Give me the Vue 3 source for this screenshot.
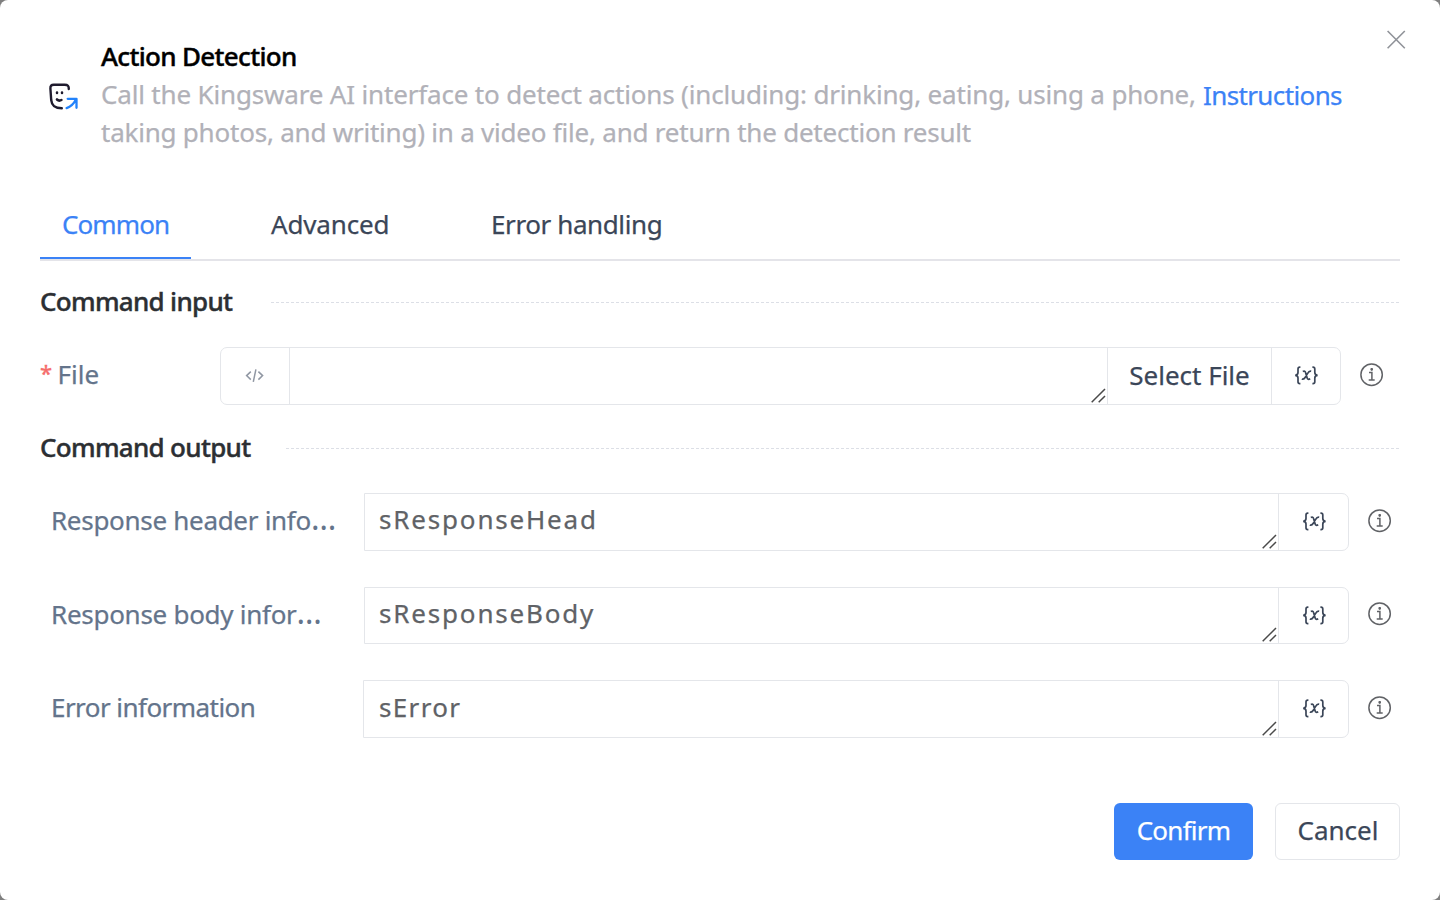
<script setup>
const tabs = [
  { name: 'Common', cls: 'tab-common' },
  { name: 'Advanced', cls: 'tab-advanced' },
  { name: 'Error handling', cls: 'tab-error' },
]
const outputs = [
  { label: 'Response header info', cut: true, value: 'sResponseHead', cls: 'out-head' },
  { label: 'Response body infor', cut: true, value: 'sResponseBody', cls: 'out-body' },
  { label: 'Error information', cut: false, value: 'sError', cls: 'out-error' },
]
</script>

<template>
  <div class="backdrop">
    <section class="dialog">
      <header class="header">
        <svg class="logo" width="30" height="28" viewBox="0 0 30 28" fill="none" stroke-linecap="round" stroke-linejoin="round">
          <path d="M19.8 6 C19.9 3 18.8 1.7 15.7 1.7 H4.8 C2.3 1.7 1.3 2.9 1.4 5.5 L2.2 17 C2.8 22.5 5.5 25.3 12.8 25.3" stroke="#1f1b2e" stroke-width="2.4" />
          <path d="M8 9.6 V9.9 M13 9.6 V9.9" stroke="#1f1b2e" stroke-width="2.5" />
          <path d="M8 16.5 Q10 18.4 12.4 17" stroke="#1f1b2e" stroke-width="2.6" />
          <path d="M18.7 15.8 H27.5 V24.8 M27 16.3 Q24 22.8 17.6 25.1" stroke="#2282fb" stroke-width="2.3" />
        </svg>
        <div class="intro">
          <h1>Action Detection</h1>
          <p class="line-a">Call the Kingsware AI interface to detect actions (including: drinking, eating, using a phone,</p>
          <p class="line-b">taking photos, and writing) in a video file, and return the detection result</p>
        </div>
        <a class="instructions">Instructions</a>
        <svg class="close" width="20" height="20" viewBox="0 0 20 20" fill="none" stroke="#909399" stroke-width="1.6">
          <path d="M1.6 1 L18.8 18.2 M18.8 1 L1.6 18.2" />
        </svg>
      </header>

      <nav class="tabs">
        <div v-for="(t, i) in tabs" :key="t.name" class="tab" :class="[t.cls, { active: i === 0 }]">{{ t.name }}</div>
      </nav>

      <div class="divider first">
        <h2>Command input</h2><svg class="dash" width="1131" height="1"><path d="M0 .5 H1131" stroke="#dcdfe6" stroke-dasharray="3 2" stroke-dashoffset="3" /></svg>
      </div>

      <div class="row file-row">
        <label class="file-label"><span class="star">*</span><span>File</span></label>
        <div class="group file-group">
          <div class="cell code">
            <svg width="20" height="14" viewBox="0 0 20 14" fill="none" stroke="#9097a3" stroke-width="1.5">
              <path d="M5.8 2.6 L1.6 6.6 L5.8 10.6 M13.4 2.6 L17.6 6.6 L13.4 10.6 M10.9 .4 L8.3 12.8" />
            </svg>
          </div>
          <div class="cell field">
            <svg class="grip" width="15" height="15" viewBox="0 0 15 15" stroke="#4a4a4a" stroke-width="1.5"><path d="M.7 14.3 L14 1 M7.7 14.3 L14 8" /></svg>
          </div>
          <div class="cell select">Select File</div>
          <div class="cell var">
            <svg width="24" height="20" viewBox="0 0 24 20" fill="none" stroke="#3b4658" stroke-width="1.7">
              <path d="M6.4 1.1 H5.8 Q4 1.1 4 3 V6.6 Q4 9.1 1.2 9.3 Q4 9.5 4 12 V15.8 Q4 17.7 5.8 17.7 H6.4" />
              <path d="M18.4 1.1 H19 Q20.8 1.1 20.8 3 V6.6 Q20.8 9.1 23.6 9.3 Q20.8 9.5 20.8 12 V15.8 Q20.8 17.7 19 17.7 H18.4" />
              <path d="M8.8 5.5 Q11 4.4 11.7 6.9 L13 11.6 Q13.7 14.3 16.2 12.8 M17.2 5.2 Q15.2 4.6 13.3 7.9 L11.3 11.3 Q9.8 13.9 7.8 13" />
            </svg>
          </div>
        </div>
        <svg class="info" width="24" height="24" viewBox="0 0 24 24" fill="none" stroke="#606266" stroke-width="1.5">
          <circle cx="11.6" cy="11.7" r="10.7" /><path d="M9 9.6 H11.9 V17 M8.7 17.1 H14.7 M11.7 5.2 V7.4" /><circle cx="11.7" cy="6.3" r=".6" />
        </svg>
      </div>

      <div class="divider second">
        <h2>Command output</h2><svg class="dash" width="1114" height="1"><path d="M0 .5 H1114" stroke="#dcdfe6" stroke-dasharray="3 2" /></svg>
      </div>

      <div class="outputs">
        <div v-for="o in outputs" :key="o.value" class="row out-row" :class="o.cls">
          <label class="out-label"><span>{{ o.label }}</span><span v-if="o.cut" class="more">…</span></label>
          <div class="group out-group">
            <div class="cell field">
              <span class="value">{{ o.value }}</span>
              <svg class="grip" width="15" height="15" viewBox="0 0 15 15" stroke="#4a4a4a" stroke-width="1.5"><path d="M.7 14.3 L14 1 M7.7 14.3 L14 8" /></svg>
            </div>
            <div class="cell var">
              <svg width="24" height="20" viewBox="0 0 24 20" fill="none" stroke="#3b4658" stroke-width="1.7">
                <path d="M6.4 1.1 H5.8 Q4 1.1 4 3 V6.6 Q4 9.1 1.2 9.3 Q4 9.5 4 12 V15.8 Q4 17.7 5.8 17.7 H6.4" />
                <path d="M18.4 1.1 H19 Q20.8 1.1 20.8 3 V6.6 Q20.8 9.1 23.6 9.3 Q20.8 9.5 20.8 12 V15.8 Q20.8 17.7 19 17.7 H18.4" />
                <path d="M8.8 5.5 Q11 4.4 11.7 6.9 L13 11.6 Q13.7 14.3 16.2 12.8 M17.2 5.2 Q15.2 4.6 13.3 7.9 L11.3 11.3 Q9.8 13.9 7.8 13" />
              </svg>
            </div>
          </div>
          <svg class="info" width="24" height="24" viewBox="0 0 24 24" fill="none" stroke="#606266" stroke-width="1.5">
            <circle cx="11.6" cy="11.7" r="10.7" /><path d="M9 9.6 H11.9 V17 M8.7 17.1 H14.7 M11.7 5.2 V7.4" /><circle cx="11.7" cy="6.3" r=".6" />
          </svg>
        </div>
      </div>

      <footer class="footer">
        <button class="btn primary">Confirm</button>
        <button class="btn plain">Cancel</button>
      </footer>
    </section>
  </div>
</template>

<style>
body { margin: 0; background: #7f7f7f; }
</style>

<style scoped>
.backdrop { width: 1440px; height: 900px; overflow: hidden; background: #7f7f7f; }
.dialog {
  box-sizing: border-box; width: 1440px; height: 900px; padding: 0 40px; background: #fff; border-radius: 8px;
  display: flex; flex-direction: column;
  font-family: "Noto Sans", "Open Sans", sans-serif; font-size: 26px; white-space: nowrap; color: #3b4658;
  -webkit-text-stroke: .25px currentColor;
}
svg { display: block; flex: none; }
h1, h2, p { margin: 0; font-size: 26px; }
.header { height: 189px; flex: none; display: flex; align-items: flex-start; }
.logo { margin: 83px 0 0 9px; }
.intro { width: 1102px; flex: none; margin: 37px 0 0 22px; }
.intro h1 { line-height: 38px; font-weight: 500; color: #000; letter-spacing: -.68px; -webkit-text-stroke-width: .4px; }
.intro p { line-height: 38px; color: #b1b1b8; }
.line-a { letter-spacing: -.17px; }
.line-b { letter-spacing: -.22px; }
.instructions { width: 139px; flex: none; margin-top: 76px; line-height: 38px; color: #3b82f6; letter-spacing: -.62px; }
.close { margin: 30px 0 0 44px; }

.tabs { box-sizing: border-box; height: 72px; flex: none; display: flex; border-bottom: 2px solid #e4e4e9; }
.tab { box-sizing: border-box; height: 70px; line-height: 70px; }
.tab.active { color: #3b82f6; border-bottom: 2px solid #3b82f6; }
.tab-common { width: 151px; padding-left: 22px; letter-spacing: -.9px; }
.tab-advanced { width: 220px; padding-left: 80px; letter-spacing: -.15px; }
.tab-error { padding-left: 80px; letter-spacing: -.4px; }

.divider { height: 40px; flex: none; display: flex; align-items: center; justify-content: space-between; }
.divider h2 { height: 40px; line-height: 38px; font-weight: 500; color: #2c2f33; letter-spacing: -.7px; -webkit-text-stroke-width: .4px; }
.divider.first { margin-top: 21px; }
.divider.second { margin-top: 23px; }

.row { display: flex; align-items: center; flex: none; }
.file-row { height: 58px; margin-top: 25px; }
.file-label { width: 180px; display: flex; line-height: 54px; height: 58px; color: #64748b; }
.star { width: 17.5px; font-size: 22px; line-height: 50px; color: #f56c6c; -webkit-text-stroke-width: .4px; }
.group { box-sizing: border-box; height: 58px; display: flex; border: 1px solid #e4e6ea; border-radius: 7px; }
.file-group { width: 1121px; }
.cell { display: flex; align-items: center; justify-content: center; position: relative; }
.cell + .cell { border-left: 1px solid #e4e6ea; }
.code { width: 68px; }
.file-group .field { flex: 1; }
.select { width: 163px; line-height: 54px; align-items: flex-start; }
.var { width: 69px; }
.file-group .var { width: 68px; }
.grip { position: absolute; right: 1px; bottom: 1px; }
.info { margin: -3px 0 0 19px; }

.outputs { margin-top: 25px; display: flex; flex-direction: column; }
.out-head { margin-bottom: 36px; }
.out-body { margin-bottom: 36px; }
.out-label { box-sizing: border-box; width: 324px; height: 57px; padding-left: 11px; line-height: 54px; color: #64748b; }
.out-head .out-label { height: 58px; letter-spacing: -.3px; }
.out-body .out-label { letter-spacing: -.28px; }
.more { font-size: 32px; line-height: 0; letter-spacing: 0; -webkit-text-stroke-width: 0; }
.out-group { width: 985px; border-radius: 0 7px 7px 0; }
.out-body .out-group { height: 57px; }
.out-error .out-label { width: 323px; height: 58px; letter-spacing: -.55px; }
.out-error .out-group { width: 986px; }
.out-group .field { flex: 1; justify-content: flex-start; align-items: flex-start; padding-left: 14px; }
.out-error .field { padding-left: 15px; }
.value { letter-spacing: 1.82px; color: #606266; line-height: 51px; }
.out-error .value { letter-spacing: 1.35px; line-height: 53px; }

.footer { margin-top: 65px; display: flex; justify-content: flex-end; gap: 22px; }
.btn { box-sizing: border-box; height: 57px; padding: 0 0 3px; font: inherit; border-radius: 6px; -webkit-text-stroke: .25px currentColor; }
.primary { width: 139px; border: 0; background: #3b82f6; color: #fff; letter-spacing: -.75px; }
.plain { width: 125px; padding-left: 1px; border: 1px solid #e4e6ea; background: #fff; color: #3b4658; }
</style>
